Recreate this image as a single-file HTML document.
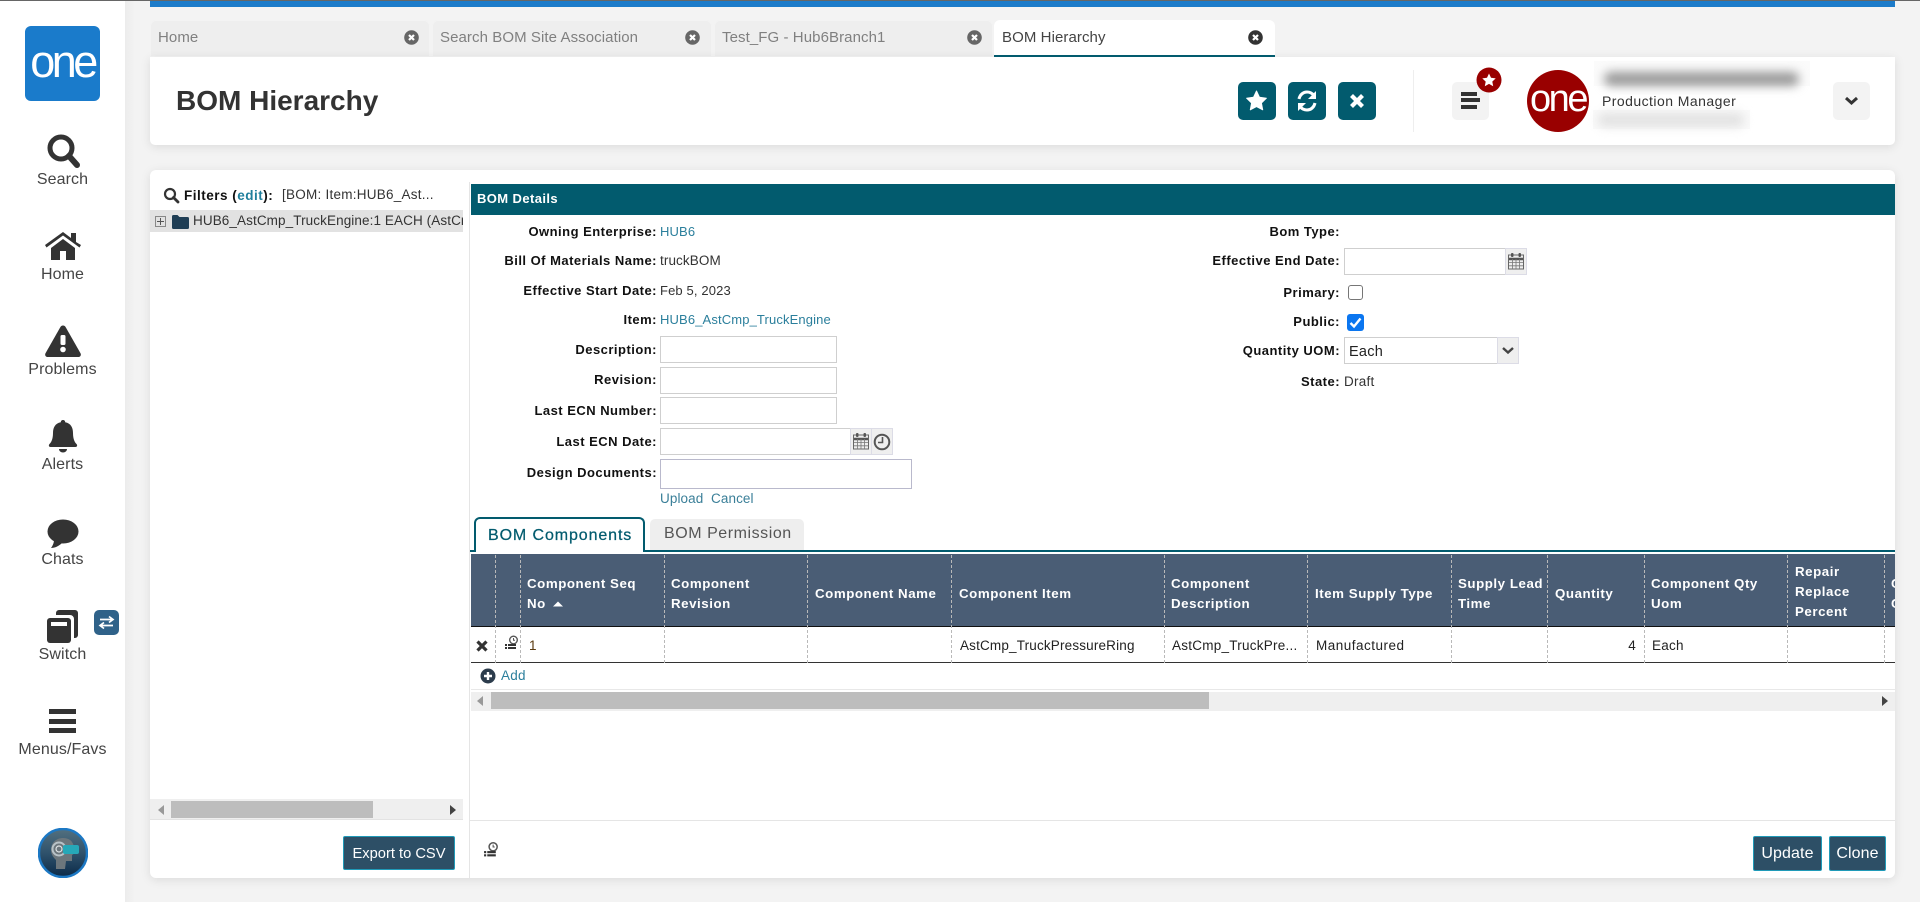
<!DOCTYPE html>
<html lang="en">
<head>
<meta charset="utf-8">
<title>BOM Hierarchy</title>
<style>
html,body{margin:0;padding:0;width:1920px;height:902px;overflow:hidden;background:#f3f3f3;font-family:"Liberation Sans",Arial,sans-serif;color:#333}
.a,.t,.l,.h{position:absolute}
.t,.l,.h{white-space:nowrap;line-height:20px;height:20px}
.t{font-size:13.5px;letter-spacing:.25px;color:#333}
.f{font-size:13px;letter-spacing:.13px}
.l{font-size:13px;font-weight:bold;letter-spacing:.48px;color:#111}
.lk{color:#2b7f9c}
.h{font-size:13.3px;font-weight:bold;letter-spacing:.55px;color:#fff}
.nav{position:absolute;left:0;width:125px;text-align:center;font-size:16px;line-height:20px;color:#444;letter-spacing:.1px}
.tab{position:absolute;top:20px;height:37px;background:#eee;border-radius:6px 6px 0 0;box-shadow:inset 0 0 0 1px #f3f3f3;font-size:15px;line-height:36px;color:#808080;box-sizing:border-box;padding-left:8px;letter-spacing:.08px}
.x{position:absolute;top:30px;width:15px;height:15px}
.inp{position:absolute;background:#fff;border:1px solid #cfcfcf;box-sizing:border-box}
.addon{position:absolute;background:#efefef;border:1px solid #dcdce6;box-sizing:border-box}
.sq{position:absolute;top:82px;width:38px;height:38px;border-radius:5px;background:#025b6e}
.sep{position:absolute;top:555px;height:108px;width:0;border-left:1px dashed #b9b9b9}
.btn{position:absolute;background:#2d4f66;border:1px solid #1f9ab8;border-radius:2px;box-sizing:border-box;color:#fff;font-size:16px;line-height:34px;text-align:center;letter-spacing:.1px}
</style>
</head>
<body>
<!-- top line / bar -->
<div class="a" style="left:150px;top:0;width:1745px;height:7px;background:#1c7bc9"></div>
<div class="a" style="left:0;top:0;width:1920px;height:1px;background:#666"></div>

<!-- sidebar -->
<div class="a" style="left:0;top:1px;width:125px;height:901px;background:#fff"></div>
<div class="a" style="left:125px;top:1px;width:25px;height:901px;background:linear-gradient(90deg,#ececec,#f3f3f3 40%)"></div>
<div class="a" style="left:25px;top:26px;width:75px;height:75px;border-radius:6px;background:#1a7bcb"></div>
<div class="a" style="left:25px;top:26px;width:75px;height:75px;text-align:center;color:#fff;font-size:45px;line-height:72px;letter-spacing:-3.5px;">one</div>

<svg class="a" style="left:44px;top:132px" width="38" height="38" viewBox="0 0 38 38"><circle cx="17" cy="16" r="11" fill="none" stroke="#333" stroke-width="5"/><path d="M25 24l8 9" stroke="#333" stroke-width="6" stroke-linecap="round"/></svg>
<div class="nav" style="top:170px">Search</div>
<svg class="a" style="left:44px;top:230px" width="38" height="32" viewBox="0 0 38 32"><path d="M1 15L19 2l8 6V3h5v9l5 3-1.500 2.500L19 5.500 2.500 17.500z" fill="#333"/><path d="M7 18L19 9l12 9v12H22v-9h-6v9H7z" fill="#333"/></svg>
<div class="nav" style="top:265px">Home</div>
<svg class="a" style="left:44px;top:324px" width="38" height="34" viewBox="0 0 38 34"><path d="M19 1.500c1.500 0 2.300 1 3 2.200l14.500 25.500c1 1.900-.2 3.800-2.300 3.800H3.800c-2.100 0-3.300-1.900-2.300-3.800L16 3.700c.7-1.200 1.500-2.200 3-2.200z" fill="#333"/><rect x="16.500" y="11" width="5" height="10" rx="1.500" fill="#fff"/><circle cx="19" cy="25.500" r="2.800" fill="#fff"/></svg>
<div class="nav" style="top:360px">Problems</div>
<svg class="a" style="left:44px;top:419px" width="38" height="34" viewBox="0 0 38 34"><path d="M19 1c1.400 0 2.200.9 2.200 2.200 5.600 1 7.800 5.300 7.800 10.800 0 6.500 2 9.500 3.500 11 1.200 1.200.6 3-1 3H6.500c-1.600 0-2.200-1.800-1-3 1.500-1.500 3.500-4.500 3.500-11 0-5.500 2.200-9.800 7.800-10.800C16.800 1.900 17.600 1 19 1z" fill="#333"/><path d="M15 30h8c0 2-1.800 3.500-4 3.500s-4-1.500-4-3.500z" fill="#333"/></svg>
<div class="nav" style="top:455px">Alerts</div>
<svg class="a" style="left:44px;top:518px" width="38" height="32" viewBox="0 0 38 32"><ellipse cx="19" cy="13.500" rx="15.500" ry="12" fill="#333"/><path d="M10 22c0 3-1.500 6-3 8 4 0 8-2 11-5z" fill="#333"/></svg>
<div class="nav" style="top:550px">Chats</div>
<svg class="a" style="left:44px;top:608px" width="38" height="36" viewBox="0 0 38 36"><path d="M12 5a3 3 0 0 1 3-3h16a3 3 0 0 1 3 3v22a3 3 0 0 1-3 3h-1V11a4 4 0 0 0-4-4H12z" fill="#333"/><rect x="3" y="10" width="24" height="25" rx="3" fill="#333"/><rect x="7" y="14" width="16" height="4" fill="#fff"/></svg>
<div class="a" style="left:94px;top:610px;width:25px;height:25px;border-radius:5px;background:#2f6289"></div>
<svg class="a" style="left:94px;top:610px" width="25" height="25" viewBox="0 0 25 25"><path d="M6 9.500h12M15 6.500l4 3-4 3M19 15.500H7M10 12.500l-4 3 4 3" fill="none" stroke="#fff" stroke-width="1.700"/></svg>
<div class="nav" style="top:645px">Switch</div>
<div class="a" style="left:49px;top:709px;width:27px;height:5px;background:#333"></div>
<div class="a" style="left:49px;top:719px;width:27px;height:5px;background:#333"></div>
<div class="a" style="left:49px;top:728px;width:27px;height:5px;background:#333"></div>
<div class="nav" style="top:740px">Menus/Favs</div>
<svg class="a" style="left:38px;top:828px" width="50" height="50" viewBox="0 0 50 50"><defs><linearGradient id="av" x1="0" y1="0" x2="0" y2="1"><stop offset="0" stop-color="#53707f"/><stop offset=".5" stop-color="#2f526c"/><stop offset="1" stop-color="#0b2a48"/></linearGradient></defs><circle cx="25" cy="25" r="24" fill="url(#av)" stroke="#1c78c4" stroke-width="2.500"/><path d="M13 22c0-8 6-12 12-12s10 3 11 9l1 6-3 2v6h-6l-1 8H18v-9c-3-3-5-6-5-10z" fill="#6c767c"/><circle cx="21" cy="21" r="6.500" fill="none" stroke="#b9c3c8" stroke-width="2"/><circle cx="21" cy="21" r="3" fill="none" stroke="#dfe4e6" stroke-width="1.200"/><rect x="25" y="17" width="16" height="9" rx="2" fill="#26a8b8"/></svg>

<!-- tabs -->
<div class="tab" style="left:150px;width:280px">Home</div>
<div class="tab" style="left:432px;width:280px">Search BOM Site Association</div>
<div class="tab" style="left:714px;width:279px">Test_FG - Hub6Branch1</div>
<svg class="x" style="left:404px" viewBox="0 0 15 15"><circle cx="7.500" cy="7.500" r="7.300" fill="#666"/><path d="M5 5l5 5M10 5l-5 5" stroke="#fff" stroke-width="2.200"/></svg>
<svg class="x" style="left:685px" viewBox="0 0 15 15"><circle cx="7.500" cy="7.500" r="7.300" fill="#666"/><path d="M5 5l5 5M10 5l-5 5" stroke="#fff" stroke-width="2.200"/></svg>
<svg class="x" style="left:967px" viewBox="0 0 15 15"><circle cx="7.500" cy="7.500" r="7.300" fill="#666"/><path d="M5 5l5 5M10 5l-5 5" stroke="#fff" stroke-width="2.200"/></svg>

<!-- header card -->
<div class="a" style="left:150px;top:57px;width:1745px;height:88px;background:#fff;border-radius:0 0 5px 5px;box-shadow:0 2px 10px rgba(0,0,0,.1)"></div>
<div class="a" style="left:176px;top:80px;font-size:28px;line-height:42px;font-weight:bold;color:#333;white-space:nowrap">BOM Hierarchy</div>
<div class="tab" style="left:994px;width:281px;background:#fff;color:#444;box-shadow:none;border-bottom:2px solid #025b6e">BOM Hierarchy</div>
<svg class="x" style="left:1248px" viewBox="0 0 15 15"><circle cx="7.500" cy="7.500" r="7.300" fill="#333"/><path d="M5 5l5 5M10 5l-5 5" stroke="#fff" stroke-width="2.200"/></svg>
<div class="sq" style="left:1238px"></div>
<div class="sq" style="left:1288px"></div>
<div class="sq" style="left:1338px"></div>
<svg class="a" style="left:1238px;top:82px" width="38" height="38" viewBox="0 0 38 38"><path d="M18.500 9l3 6.300 6.900.9-5 4.800 1.300 6.800-6.200-3.300-6.200 3.300 1.300-6.800-5-4.800 6.900-.9z" fill="#fff" stroke="#fff" stroke-linejoin="round"/></svg>
<svg class="a" style="left:1288px;top:82px" width="38" height="38" viewBox="0 0 38 38"><path d="M11 17c1-4.500 4.300-7 8-7 3 0 5.200 1.300 7 3.500" fill="none" stroke="#fff" stroke-width="3"/><path d="M28 9v8h-8z" fill="#fff"/><path d="M27 21c-1 4.500-4.300 7-8 7-3 0-5.200-1.300-7-3.500" fill="none" stroke="#fff" stroke-width="3"/><path d="M10 29v-8h8z" fill="#fff"/></svg>
<svg class="a" style="left:1338px;top:82px" width="38" height="38" viewBox="0 0 38 38"><path d="M13.500 13.500l11 11M24.500 13.500l-11 11" stroke="#fff" stroke-width="4.200"/></svg>
<div class="a" style="left:1413px;top:70px;width:1px;height:62px;background:#eee"></div>
<div class="a" style="left:1452px;top:82px;width:37px;height:38px;border-radius:5px;background:#f3f3f3"></div>
<div class="a" style="left:1461px;top:92px;width:16px;height:4px;background:#333"></div>
<div class="a" style="left:1461px;top:98px;width:19px;height:4px;background:#333"></div>
<div class="a" style="left:1461px;top:105px;width:16px;height:4px;background:#333"></div>
<svg class="a" style="left:1476px;top:67px" width="26" height="26" viewBox="0 0 26 26"><circle cx="13" cy="13" r="12.500" fill="#990000"/><path d="M13 6.500l2 4.300 4.700.6-3.400 3.200.9 4.600-4.200-2.300-4.200 2.300.9-4.600-3.400-3.200 4.700-.6z" fill="#fff"/></svg>
<div class="a" style="left:1527px;top:70px;width:62px;height:62px;border-radius:50%;background:#990000"></div>
<div class="a" style="left:1527px;top:70px;width:62px;height:62px;text-align:center;color:#fff;font-size:38px;line-height:58px;letter-spacing:-2.500px">one</div>
<div class="a" style="left:1594px;top:61px;width:216px;height:25px;background:#fbfbfb"></div>
<div class="a" style="left:1604px;top:72px;width:195px;height:14px;border-radius:7px;background:#999;filter:blur(5px)"></div>
<div class="a" style="left:1593px;top:110px;width:157px;height:19px;background:#fafafa"></div>
<div class="a" style="left:1598px;top:113px;width:146px;height:14px;border-radius:6px;background:#e2e2e2;filter:blur(5px)"></div>
<div class="t" style="left:1602px;top:91px;font-size:14px;letter-spacing:.45px;color:#333">Production Manager</div>
<div class="a" style="left:1833px;top:82px;width:37px;height:38px;border-radius:5px;background:#f3f3f3"></div>
<svg class="a" style="left:1833px;top:82px" width="37" height="38" viewBox="0 0 37 38"><path d="M13 16l5.500 5 5.500-5" fill="none" stroke="#333" stroke-width="3"/></svg>

<!-- main card -->
<div class="a" style="left:150px;top:170px;width:1745px;height:708px;background:#fff;border-radius:6px;box-shadow:0 2px 10px rgba(0,0,0,.1)"></div>
<div class="a" style="left:469px;top:182px;width:1px;height:696px;background:#e5e5e5"></div>

<!-- left pane -->
<svg class="a" style="left:163px;top:187px" width="17" height="17" viewBox="0 0 17 17"><circle cx="7" cy="7" r="5" fill="none" stroke="#333" stroke-width="2.200"/><path d="M10.500 10.500l4.500 4.500" stroke="#333" stroke-width="2.800" stroke-linecap="round"/></svg>
<div class="l" style="left:184px;top:186px;font-size:13.5px;letter-spacing:.5px">Filters (<span style="color:#1f7f9c">edit</span>):</div>
<div class="t" style="left:282px;top:185px">[BOM: Item:HUB6_Ast...</div>
<div class="a" style="left:150px;top:210px;width:313px;height:22px;background:#e2e2e2"></div>
<div class="a" style="left:155px;top:216px;width:11px;height:11px;border:1px solid #888;box-sizing:border-box"></div>
<div class="a" style="left:157px;top:221px;width:7px;height:1px;background:#555"></div>
<div class="a" style="left:160px;top:218px;width:1px;height:7px;background:#555"></div>
<svg class="a" style="left:172px;top:214px" width="17" height="15" viewBox="0 0 17 15"><path d="M0 2.500A1.500 1.500 0 0 1 1.500 1h4l2 2h8A1.500 1.500 0 0 1 17 4.500v9a1.500 1.500 0 0 1-1.500 1.500h-14A1.500 1.500 0 0 1 0 13.500z" fill="#1f3e55"/></svg>
<div class="a" style="left:193px;top:210px;width:270px;height:22px;overflow:hidden"><span style="white-space:nowrap;font-size:13.5px;line-height:22px;letter-spacing:.1px;color:#333">HUB6_AstCmp_TruckEngine:1 EACH (AstCmp_Truck</span></div>
<div class="a" style="left:150px;top:799px;width:313px;height:21px;background:#efefef;border-bottom:1px solid #e3e3e3;box-sizing:border-box"></div>
<div class="a" style="left:171px;top:801px;width:202px;height:17px;background:#bdbdbd"></div>
<svg class="a" style="left:157px;top:804px" width="8" height="12" viewBox="0 0 8 12"><path d="M7 1v10L1 6z" fill="#999"/></svg>
<svg class="a" style="left:449px;top:804px" width="8" height="12" viewBox="0 0 8 12"><path d="M1 1v10l6-5z" fill="#444"/></svg>
<div class="a" style="left:470px;top:820px;width:1425px;height:1px;background:#e5e5e5"></div>
<div class="btn" style="left:343px;top:836px;width:112px;height:34px;font-size:14.7px;letter-spacing:0">Export to CSV</div>

<!-- BOM details -->
<div class="a" style="left:471px;top:184px;width:1424px;height:31px;background:#025b6e"></div>
<div class="h" style="left:477px;top:189px;font-size:13px;letter-spacing:.4px">BOM Details</div>

<div class="l" style="right:1263px;top:222px">Owning Enterprise:</div>
<div class="t lk f" style="left:660px;top:222px">HUB6</div>
<div class="l" style="right:1263px;top:251px">Bill Of Materials Name:</div>
<div class="t" style="left:660px;top:251px;letter-spacing:.1px">truckBOM</div>
<div class="l" style="right:1263px;top:281px">Effective Start Date:</div>
<div class="t f" style="left:660px;top:281px">Feb 5, 2023</div>
<div class="l" style="right:1263px;top:310px">Item:</div>
<div class="t lk f" style="left:660px;top:310px">HUB6_AstCmp_TruckEngine</div>
<div class="l" style="right:1263px;top:340px">Description:</div>
<div class="inp" style="left:660px;top:336px;width:177px;height:27px"></div>
<div class="l" style="right:1263px;top:370px">Revision:</div>
<div class="inp" style="left:660px;top:367px;width:177px;height:27px"></div>
<div class="l" style="right:1263px;top:401px">Last ECN Number:</div>
<div class="inp" style="left:660px;top:397px;width:177px;height:27px"></div>
<div class="l" style="right:1263px;top:432px">Last ECN Date:</div>
<div class="inp" style="left:660px;top:428px;width:191px;height:27px"></div>
<div class="addon" style="left:850px;top:428px;width:22px;height:27px"></div>
<div class="addon" style="left:871px;top:428px;width:22px;height:27px"></div>
<svg class="a" style="left:853px;top:432px" width="16" height="18" viewBox="0 0 16 18"><rect x=".5" y="3" width="15" height="14" fill="#eee" stroke="#666"/><path d="M1 7h14" stroke="#555" stroke-width="2.500"/><path d="M1 10.500h14M1 13.800h14M4.500 7v10M8 7v10M11.500 7v10" stroke="#777" stroke-width=".8"/><rect x="3" y="1" width="2.500" height="4" rx="1" fill="#555"/><rect x="10.500" y="1" width="2.500" height="4" rx="1" fill="#555"/></svg>
<svg class="a" style="left:873px;top:433px" width="18" height="18" viewBox="0 0 18 18"><circle cx="9" cy="9" r="7.300" fill="#efefef" stroke="#555" stroke-width="2"/><path d="M9.500 4v5.500H5" fill="none" stroke="#555" stroke-width="1.600"/></svg>
<div class="l" style="right:1263px;top:463px">Design Documents:</div>
<div class="inp" style="left:660px;top:459px;width:252px;height:30px;border-color:#b9b9cc"></div>
<div class="t lk" style="left:660px;top:489px;letter-spacing:.1px;color:#3a7f98">Upload</div>
<div class="t lk" style="left:711px;top:489px;letter-spacing:.1px;color:#3a7f98">Cancel</div>

<div class="l" style="right:580px;top:222px">Bom Type:</div>
<div class="l" style="right:580px;top:251px">Effective End Date:</div>
<div class="inp" style="left:1344px;top:248px;width:162px;height:27px"></div>
<div class="addon" style="left:1505px;top:248px;width:22px;height:27px"></div>
<svg class="a" style="left:1508px;top:252px" width="16" height="18" viewBox="0 0 16 18"><rect x=".5" y="3" width="15" height="14" fill="#eee" stroke="#666"/><path d="M1 7h14" stroke="#555" stroke-width="2.500"/><path d="M1 10.500h14M1 13.800h14M4.500 7v10M8 7v10M11.500 7v10" stroke="#777" stroke-width=".8"/><rect x="3" y="1" width="2.500" height="4" rx="1" fill="#555"/><rect x="10.500" y="1" width="2.500" height="4" rx="1" fill="#555"/></svg>
<div class="l" style="right:580px;top:283px">Primary:</div>
<div class="a" style="left:1348px;top:285px;width:15px;height:15px;border:1.500px solid #767676;border-radius:3px;box-sizing:border-box;background:#fff"></div>
<div class="l" style="right:580px;top:312px">Public:</div>
<svg class="a" style="left:1347px;top:314px" width="17" height="17" viewBox="0 0 17 17"><rect width="17" height="17" rx="3" fill="#0b76f0"/><path d="M3.500 9l3.500 3.500 6.500-8" fill="none" stroke="#fff" stroke-width="2.400"/></svg>
<div class="l" style="right:580px;top:341px">Quantity UOM:</div>
<div class="inp" style="left:1344px;top:337px;width:154px;height:27px"></div>
<div class="t" style="left:1349px;top:342px;font-size:14.500px;color:#222">Each</div>
<div class="addon" style="left:1497px;top:337px;width:22px;height:27px"></div>
<svg class="a" style="left:1497px;top:337px" width="22" height="27" viewBox="0 0 22 27"><path d="M6 11l5 4.500 5-4.500" fill="none" stroke="#444" stroke-width="2.400"/></svg>
<div class="l" style="right:580px;top:372px">State:</div>
<div class="t" style="left:1344px;top:372px">Draft</div>

<!-- inner tabs -->
<div class="a" style="left:470px;top:550px;width:1425px;height:2px;background:#025b6e"></div>
<div class="a" style="left:474px;top:517px;width:171px;height:35px;background:#fff;border:2px solid #025b6e;border-bottom:none;border-radius:6px 6px 0 0;box-sizing:border-box"></div>
<div class="a" style="left:488px;top:525px;font-size:16px;line-height:22px;color:#025b6e;white-space:nowrap;letter-spacing:.9px;-webkit-text-stroke:.25px #025b6e">BOM Components</div>
<div class="a" style="left:650px;top:519px;width:154px;height:31px;background:#eee;border-radius:5px 5px 0 0"></div>
<div class="a" style="left:664px;top:523px;font-size:16px;line-height:22px;color:#555;white-space:nowrap;letter-spacing:.55px">BOM Permission</div>

<!-- table -->
<div class="a" style="left:471px;top:554px;width:1424px;height:72px;background:#4a5d75"></div>
<div class="a" style="left:471px;top:626px;width:1424px;height:1px;background:#111"></div>
<div class="a" style="left:471px;top:662px;width:1424px;height:1px;background:#333"></div>
<div class="sep" style="left:495px"></div><div class="sep" style="left:520px"></div><div class="sep" style="left:664px"></div><div class="sep" style="left:807px"></div><div class="sep" style="left:951px"></div><div class="sep" style="left:1164px"></div><div class="sep" style="left:1307px"></div><div class="sep" style="left:1451px"></div><div class="sep" style="left:1547px"></div><div class="sep" style="left:1644px"></div><div class="sep" style="left:1787px"></div><div class="sep" style="left:1884px"></div>

<div class="h" style="left:527px;top:574px">Component Seq</div>
<div class="h" style="left:527px;top:594px">No</div>
<svg class="a" style="left:553px;top:601px" width="10" height="6" viewBox="0 0 10 6"><path d="M0 5.500L5 .5l5 5z" fill="#fff"/></svg>
<div class="h" style="left:671px;top:574px">Component</div>
<div class="h" style="left:671px;top:594px">Revision</div>
<div class="h" style="left:815px;top:584px">Component Name</div>
<div class="h" style="left:959px;top:584px">Component Item</div>
<div class="h" style="left:1171px;top:574px">Component</div>
<div class="h" style="left:1171px;top:594px">Description</div>
<div class="h" style="left:1315px;top:584px">Item Supply Type</div>
<div class="h" style="left:1458px;top:574px">Supply Lead</div>
<div class="h" style="left:1458px;top:594px">Time</div>
<div class="h" style="left:1555px;top:584px">Quantity</div>
<div class="h" style="left:1651px;top:574px">Component Qty</div>
<div class="h" style="left:1651px;top:594px">Uom</div>
<div class="h" style="left:1795px;top:562px">Repair</div>
<div class="h" style="left:1795px;top:582px">Replace</div>
<div class="h" style="left:1795px;top:602px">Percent</div>
<div class="a" style="left:1891px;top:574px;width:4px;height:40px;overflow:hidden"><span class="h" style="left:0;top:0">C</span><span class="h" style="left:0;top:20px">C</span></div>

<svg class="a" style="left:476px;top:640px" width="12" height="12" viewBox="0 0 12 12"><path d="M1.500 1.500l9 9M10.500 1.500l-9 9" stroke="#333" stroke-width="3.200"/></svg>
<svg class="a" style="left:504px;top:635px" width="15" height="16" viewBox="0 0 15 16"><circle cx="9.500" cy="5" r="3.800" fill="#fff" stroke="#555" stroke-width="1.400"/><path d="M9.500 3v2.200h1.500" fill="none" stroke="#555"/><rect x="4" y="9" width="8" height="2" fill="#333"/><rect x="1" y="9" width="2" height="2" fill="#333"/><rect x="4" y="12" width="8" height="2" fill="#333"/><rect x="1" y="12" width="2" height="2" fill="#333"/></svg>
<div class="t" style="left:529px;top:636px;color:#5a3a10">1</div>
<div class="t" style="left:960px;top:636px;color:#222;letter-spacing:.17px">AstCmp_TruckPressureRing</div>
<div class="t" style="left:1172px;top:636px;color:#222">AstCmp_TruckPre...</div>
<div class="t" style="left:1316px;top:636px;color:#222;letter-spacing:.5px">Manufactured</div>
<div class="t" style="right:284px;top:636px;color:#222">4</div>
<div class="t" style="left:1652px;top:636px;color:#222">Each</div>

<svg class="a" style="left:480px;top:668px" width="16" height="16" viewBox="0 0 16 16"><circle cx="8" cy="8" r="7.500" fill="#2c3c4c"/><path d="M8 4v8M4 8h8" stroke="#fff" stroke-width="2.400"/></svg>
<div class="t lk" style="left:501px;top:666px">Add</div>
<div class="a" style="left:471px;top:689px;width:1424px;height:1px;background:#e8e8e8"></div>
<div class="a" style="left:471px;top:692px;width:1424px;height:19px;background:#efefef"></div>
<div class="a" style="left:491px;top:692px;width:718px;height:17px;background:#bdbdbd"></div>
<svg class="a" style="left:476px;top:695px" width="8" height="12" viewBox="0 0 8 12"><path d="M7 1v10L1 6z" fill="#999"/></svg>
<svg class="a" style="left:1881px;top:695px" width="8" height="12" viewBox="0 0 8 12"><path d="M1 1v10l6-5z" fill="#444"/></svg>

<!-- footer -->
<svg class="a" style="left:483px;top:841px" width="16" height="18" viewBox="0 0 15 16"><circle cx="9.500" cy="5" r="3.800" fill="#fff" stroke="#555" stroke-width="1.400"/><path d="M9.500 3v2.200h1.500" fill="none" stroke="#555"/><rect x="4" y="9" width="8" height="2" fill="#333"/><rect x="1" y="9" width="2" height="2" fill="#333"/><rect x="4" y="12" width="8" height="2" fill="#333"/><rect x="1" y="12" width="2" height="2" fill="#333"/></svg>
<div class="btn" style="left:1753px;top:836px;width:69px;height:35px">Update</div>
<div class="btn" style="left:1829px;top:836px;width:57px;height:35px">Clone</div>
</body>
</html>
